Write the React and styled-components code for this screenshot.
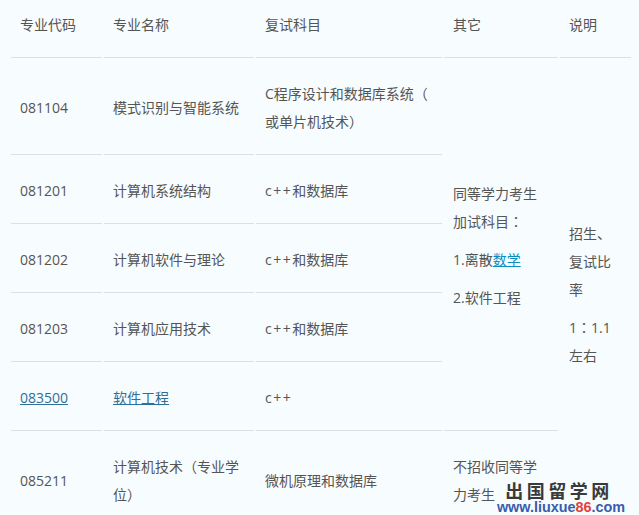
import React from "react";
import styled, { createGlobalStyle } from "styled-components";

const Global = createGlobalStyle`
  html, body { margin: 0; padding: 0; background: #f7fcff; }
  body { width: 639px; height: 515px; overflow: hidden; }
`;

const Page = styled.div`
  position: relative;
  width: 639px;
  height: 515px;
  overflow: hidden;
  background: #f7fcff;
  font-family: "Open Sans", "Noto Sans CJK SC", sans-serif;
  font-size: 14px;
  line-height: 28px;
  color: #555;
`;

const Table = styled.table`
  margin-left: 9px;
  width: 624px;
  table-layout: fixed;
  border-collapse: separate;
  border-spacing: 2px 0;
`;

const Col = styled.col`
  width: ${(p) => p.$w}px;
`;

const Cell = styled.td`
  padding: ${(p) => (p.$head ? "11px 9px 18px" : "22px 9px 18px")};
  border-bottom: 1px solid #dcdfe5;
  vertical-align: middle;
  text-align: left;
  line-break: ${(p) => (p.$loose ? "anywhere" : "auto")};
`;

const Para = styled.p`
  margin: 0 0 ${(p) => (p.$gap ? "10px" : "0")};
`;

const Link = styled.a`
  color: ${(p) => (p.$bright ? "#0a8fc0" : "#2f6f96")};
  text-decoration: underline;
`;

const Punct = styled.span`
  font-family: "Noto Sans CJK TC", sans-serif;
  line-height: 1;
`;

const Plus = styled.span`
  letter-spacing: 1.5px;
`;

const Watermark = styled.div`
  position: absolute;
  right: 13px;
  bottom: 1px;
  width: 130px;
  display: flex;
  flex-direction: column;
  align-items: center;
  font-family: "Liberation Sans", "Noto Sans CJK SC", sans-serif;
`;

const MarkTitle = styled.div`
  margin-left: -4px;
  font-family: "Noto Sans CJK SC", sans-serif;
  font-size: 18px;
  font-weight: 700;
  line-height: 19px;
  letter-spacing: 3.5px;
  color: #3a3a3a;
`;

const MarkUrl = styled.div`
  font-size: 14.4px;
  font-weight: 700;
  line-height: 14px;
  color: #3a5dab;
`;

const Red = styled.span`
  color: #e0403a;
`;

const rows = [
  { code: "081201", name: "计算机系统结构" },
  { code: "081202", name: "计算机软件与理论" },
  { code: "081203", name: "计算机应用技术" },
];

export default function App() {
  return (
    <Page>
      <Global />
      <Table>
        <colgroup>
          <Col $w={91} />
          <Col $w={150} />
          <Col $w={186} />
          <Col $w={114} />
          <Col $w={71} />
        </colgroup>
        <tbody>
          <tr>
            <Cell $head>专业代码</Cell>
            <Cell $head>专业名称</Cell>
            <Cell $head>复试科目</Cell>
            <Cell $head>其它</Cell>
            <Cell $head>说明</Cell>
          </tr>
          <tr>
            <Cell>081104</Cell>
            <Cell>模式识别与智能系统</Cell>
            <Cell $loose>C程序设计和数据库系统<Punct>（</Punct>或单片机技术<Punct>）</Punct></Cell>
            <Cell rowSpan={5}>
              <Para $gap>同等学力考生加试科目<Punct>：</Punct></Para>
              <Para $gap>1.离散<Link $bright>数学</Link></Para>
              <Para>2.软件工程</Para>
            </Cell>
            <Cell rowSpan={6}>
              <Para $gap>招生、复试比率</Para>
              <Para>1<Punct>：</Punct>1.1左右</Para>
            </Cell>
          </tr>
          {rows.map((r) => (
            <tr key={r.code}>
              <Cell>{r.code}</Cell>
              <Cell>{r.name}</Cell>
              <Cell><Plus>c++</Plus>和数据库</Cell>
            </tr>
          ))}
          <tr>
            <Cell><Link>083500</Link></Cell>
            <Cell><Link>软件工程</Link></Cell>
            <Cell><Plus>c++</Plus></Cell>
          </tr>
          <tr>
            <Cell>085211</Cell>
            <Cell>计算机技术<Punct>（</Punct>专业学位<Punct>）</Punct></Cell>
            <Cell>微机原理和数据库</Cell>
            <Cell>不招收同等学力考生</Cell>
          </tr>
        </tbody>
      </Table>
      <Watermark>
        <MarkTitle>出国留学网</MarkTitle>
        <MarkUrl>www.liuxue<Red>86</Red>.com</MarkUrl>
      </Watermark>
    </Page>
  );
}
